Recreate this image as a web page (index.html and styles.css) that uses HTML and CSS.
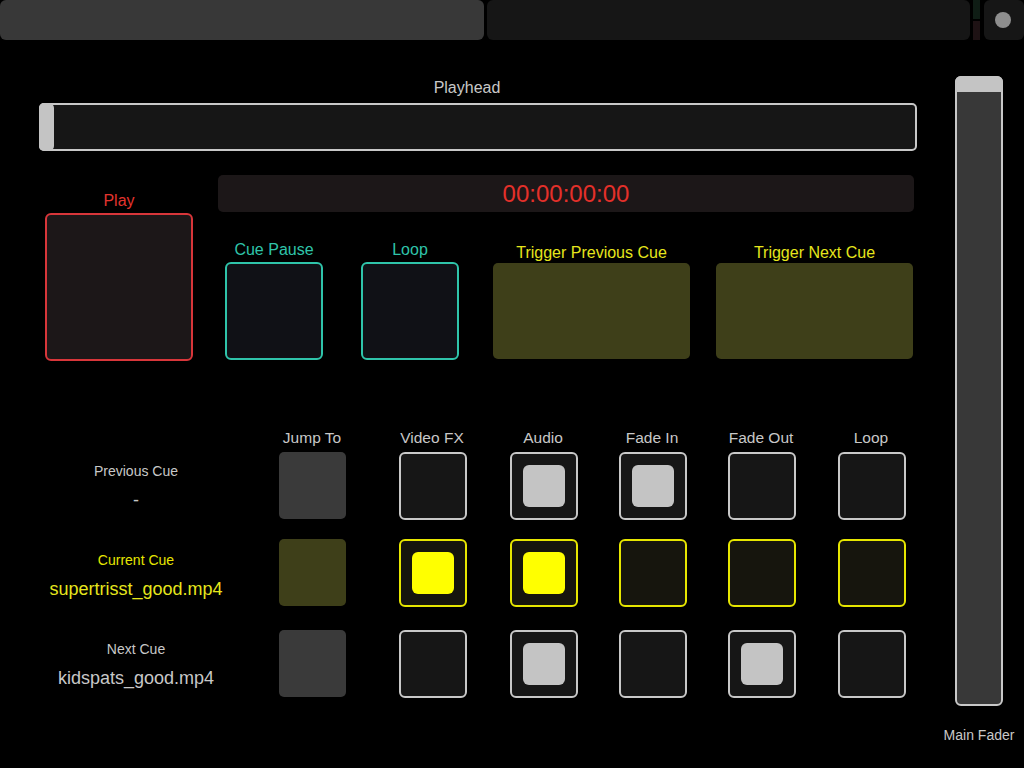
FILE: index.html
```html
<!DOCTYPE html>
<html>
<head>
<meta charset="utf-8">
<link rel="stylesheet" href="styles.css">
</head>
<body>
<div class="app">
  <header class="topbar">
    <div class="tab tab-a"></div>
    <div class="tab tab-b"></div>
    <div class="meter"><span class="m-top"></span><span class="m-bot"></span></div>
    <div class="rec"><span class="dot"></span></div>
  </header>
  <div class="main">
    <div class="left">
      <section class="playhead">
        <div class="ph-label">Playhead</div>
        <div class="ph-bar"><div class="ph-handle"></div></div>
      </section>

      <section class="transport">
        <div class="play-col">
          <div class="lbl red">Play</div>
          <div class="play-box"></div>
        </div>
        <div class="tr-right">
          <div class="timecode">00:00:00:00</div>
          <div class="tr-row">
            <div class="tcol cue-pause">
              <div class="lbl teal">Cue Pause</div>
              <div class="teal-box"></div>
            </div>
            <div class="tcol loop">
              <div class="lbl teal">Loop</div>
              <div class="teal-box"></div>
            </div>
            <div class="tcol trig trig-prev">
              <div class="lbl yel">Trigger Previous Cue</div>
              <div class="olive-box"></div>
            </div>
            <div class="tcol trig trig-next">
              <div class="lbl yel">Trigger Next Cue</div>
              <div class="olive-box"></div>
            </div>
          </div>
        </div>
      </section>

      <section class="cues">
        <div class="hdr-blank"></div>
        <div class="hdr"><span>Jump To</span></div>
        <div class="hdr"><span>Video FX</span></div>
        <div class="hdr"><span>Audio</span></div>
        <div class="hdr"><span>Fade In</span></div>
        <div class="hdr"><span>Fade Out</span></div>
        <div class="hdr"><span>Loop</span></div>

        <div class="cue-name">
          <div class="cn-label">Previous Cue</div>
          <div class="cn-file">-</div>
        </div>
        <div class="jump"></div>
        <div class="cell"></div>
        <div class="cell"><span class="inner"></span></div>
        <div class="cell"><span class="inner"></span></div>
        <div class="cell"></div>
        <div class="cell"></div>

        <div class="cue-name current">
          <div class="cn-label">Current Cue</div>
          <div class="cn-file">supertrisst_good.mp4</div>
        </div>
        <div class="jump cur"></div>
        <div class="cell cur"><span class="inner"></span></div>
        <div class="cell cur"><span class="inner"></span></div>
        <div class="cell cur"></div>
        <div class="cell cur"></div>
        <div class="cell cur"></div>

        <div class="cue-name">
          <div class="cn-label">Next Cue</div>
          <div class="cn-file">kidspats_good.mp4</div>
        </div>
        <div class="jump"></div>
        <div class="cell"></div>
        <div class="cell"><span class="inner"></span></div>
        <div class="cell"></div>
        <div class="cell"><span class="inner"></span></div>
        <div class="cell"></div>
      </section>
    </div>

    <aside class="fader-col">
      <div class="fader"><div class="fader-handle"></div></div>
      <div class="fader-label">Main Fader</div>
    </aside>
  </div>
</div>
</body>
</html>
```

FILE: styles.css
```css
* { box-sizing: border-box; }
html, body {
  margin: 0;
  padding: 0;
  background: #000;
}
body {
  width: 1024px;
  height: 768px;
  overflow: hidden;
  font-family: "Liberation Sans", Arial, sans-serif;
  color: #c8c8c8;
}

/* top bar */
.topbar {
  display: flex;
  height: 40px;
}
.tab {
  height: 40px;
  border-radius: 6px;
}
.tab-a { width: 484px; background: #383838; }
.tab-b { width: 484px; margin-left: 3px; background: #161616; }
.meter {
  width: 7px;
  margin-left: 3px;
  display: flex;
  flex-direction: column;
  gap: 2px;
}
.m-top { flex: 1; background: #0f1d15; }
.m-bot { flex: 1; background: #1e1214; }
.rec {
  width: 40px;
  margin-left: 4px;
  background: #161616;
  border-radius: 6px;
  display: flex;
  align-items: center;
  justify-content: center;
}
.dot {
  width: 16px;
  height: 16px;
  border-radius: 50%;
  background: #8e8e8e;
  margin-left: -2px;
}

.main {
  display: flex;
}
.left {
  width: 940px;
}

/* playhead */
.playhead {
  padding-top: 39px;
  padding-left: 39px;
}
.ph-label {
  width: 856px;
  text-align: center;
  font-size: 16px;
  line-height: 18px;
  height: 18px;
  color: #c8c8c8;
}
.ph-bar {
  margin-top: 6px;
  width: 878px;
  height: 48px;
  background: #161616;
  border: 2px solid #c8c8c8;
  border-radius: 5px;
  display: flex;
}
.ph-handle {
  width: 15px;
  margin: -2px 0 -2px -2px;
  background: #c4c4c4;
  border-radius: 5px;
}

/* transport */
.transport {
  display: flex;
  align-items: flex-start;
  margin-top: 24px;
}
.lbl {
  font-size: 16px;
  line-height: 18px;
  height: 18px;
  text-align: center;
  white-space: nowrap;
}
.red { color: #e4342e; }
.teal { color: #2fc4aa; }
.yel { color: #e6e61c; }

.play-col {
  margin-left: 45px;
  margin-top: 17px;
  width: 148px;
}
.play-box {
  margin-top: 3px;
  width: 148px;
  height: 148px;
  background: #1c1718;
  border: 2px solid #d8363a;
  border-radius: 6px;
}
.tr-right {
  margin-left: 25px;
  width: 696px;
}
.timecode {
  height: 37px;
  background: #1c1718;
  border-radius: 5px;
  color: #e4302a;
  font-size: 24px;
  line-height: 37px;
  text-align: center;
}
.tr-row {
  display: flex;
  align-items: flex-start;
  margin-top: 29px;
  padding-left: 7px;
}
.tcol { display: flex; flex-direction: column; align-items: center; }
.cue-pause { width: 98px; }
.loop { width: 98px; margin-left: 38px; }
.trig-prev { width: 197px; margin-left: 34px; margin-top: 3px; }
.trig-next { width: 197px; margin-left: 26px; margin-top: 3px; }
.teal-box {
  margin-top: 3px;
  width: 98px;
  height: 98px;
  background: #101116;
  border: 2px solid #2fc4aa;
  border-radius: 6px;
}
.olive-box {
  margin-top: 1px;
  width: 197px;
  height: 96px;
  background: #3e3f19;
  border-radius: 5px;
}

/* cue grid */
.cues {
  margin-top: 68px;
  display: grid;
  grid-template-columns: 279px 120px 111px 109px 109px 110px 68px;
  grid-template-rows: 23px 87px 91px 68px;
  align-items: start;
  justify-items: start;
}
.hdr {
  width: 68px;
  display: flex;
  justify-content: center;
  white-space: nowrap;
  font-size: 15.5px;
  line-height: 18px;
  color: #c8c8c8;
}
.hdr span { margin-left: -2px; }
.cue-name {
  width: 272px;
  text-align: center;
  padding-top: 11px;
  color: #c8c8c8;
  white-space: nowrap;
}
.cue-name.current { padding-top: 13px; }
.cn-label {
  font-size: 14px;
  line-height: 16px;
}
.cn-file {
  margin-top: 11px;
  font-size: 18px;
  line-height: 21px;
}
.cue-name.current .cn-label { color: #e6e600; }
.cue-name.current .cn-file { color: #e6e61c; }

.jump {
  width: 67px;
  height: 67px;
  background: #3a3a3a;
  border-radius: 5px;
}
.jump.cur { background: #3e3f19; }
.cell {
  width: 68px;
  height: 68px;
  background: #161616;
  border: 2px solid #c8c8c8;
  border-radius: 6px;
  display: flex;
  align-items: center;
  justify-content: center;
}
.cell.cur {
  background: #16150d;
  border-color: #e6e600;
}
.inner {
  width: 42px;
  height: 42px;
  border-radius: 6px;
  background: #c4c4c4;
}
.cell.cur .inner { background: #ffff00; }

/* main fader */
.fader-col {
  width: 78px;
  display: flex;
  flex-direction: column;
  align-items: center;
  padding-top: 36px;
}
.fader {
  width: 48px;
  height: 630px;
  background: #383838;
  border: 2px solid #c8c8c8;
  border-radius: 6px;
  display: flex;
  flex-direction: column;
}
.fader-handle {
  height: 16px;
  margin: -2px -2px 0 -2px;
  background: #c4c4c4;
  border-radius: 6px 6px 2px 2px;
}
.fader-label {
  margin-top: 21px;
  font-size: 14px;
  line-height: 16px;
  color: #c8c8c8;
  white-space: nowrap;
}
```
